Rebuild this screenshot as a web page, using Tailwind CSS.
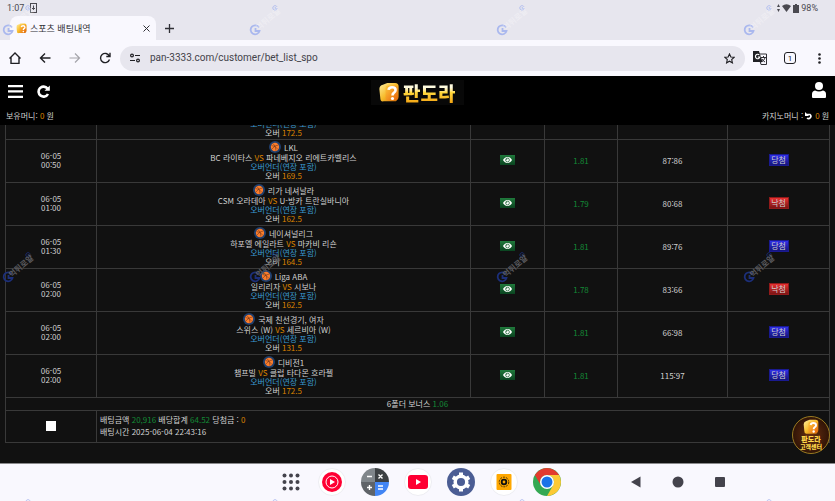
<!DOCTYPE html>
<html lang="ko">
<head>
  <meta charset="UTF-8">
  <meta name="viewport" content="width=device-width, initial-scale=1.0">
  <title>스포츠 배팅내역</title>
  <script src="https://cdn.jsdelivr.net/npm/@tailwindcss/browser@4"></script>
</head>
<body class="relative flex h-screen flex-col overflow-hidden bg-[#111111] font-['Noto_Sans_CJK_KR','Noto_Sans',sans-serif] text-[8px] leading-[9px] text-[#d0d0d0]">
  <!-- Shared icons -->
  <svg class="absolute h-0 w-0">
    <defs>
      <linearGradient id="gold" x1="0" y1="0" x2="1" y2="1">
        <stop offset="0" stop-color="#fff0a0"/>
        <stop offset=".5" stop-color="#f7bb2a"/>
        <stop offset="1" stop-color="#c46a08"/>
      </linearGradient>
      <linearGradient id="amber" x1="0" y1="0" x2="1" y2="1">
        <stop offset="0" stop-color="#ffc93c"/>
        <stop offset="1" stop-color="#e8650a"/>
      </linearGradient>
    </defs>
    <symbol id="box" viewBox="0 0 24 24">
      <path d="M1 8Q1 4 5 3l5-2h9q4 0 4 4v12q0 3-3 5H6q-4 1-4-4z" fill="url(#gold)"/>
      <path d="M10 4h9q3 0 3 3v10q0 4-4 4h-7q-3 0-3-3V7q0-3 2-3z" fill="url(#amber)"/>
      <path d="M11.500 9q.5-3 4-3 4 0 4 3.200 0 2-2 3.200-1.500 1-1.500 3" fill="none" stroke="#fff" stroke-width="3"/>
      <circle cx="16" cy="18.800" r="1.800" fill="#fff"/>
    </symbol>
    <symbol id="ball" viewBox="0 0 24 24">
      <circle cx="12" cy="12" r="12" fill="#1f3f6e"/>
      <circle cx="12" cy="12" r="8.300" fill="#fb7d2c"/>
      <path d="M5 9q8 0 13 8M8 5q6 5 6 14.500M19 8q-8 0-13 8" fill="none" stroke="#5a2a18"/>
    </symbol>
    <symbol id="eye" viewBox="0 0 24 16">
      <path d="M12 0C6 0 2 4 0 8c2 4 6 8 12 8s10-4 12-8c-2-4-6-8-12-8z" fill="#fff"/>
      <circle cx="12" cy="8" r="5" fill="none" stroke="#17602f" stroke-width="2"/>
      <path d="M9 8a3 3 0 0 1 3-3" fill="none" stroke="#17602f" stroke-width="1.500"/>
    </symbol>
    <symbol id="mark" viewBox="0 0 12 12">
      <path d="M10 3.500A4.500 4.500 0 1 0 10.500 7H6.500V4" fill="none" stroke="currentColor" stroke-width="1.800"/>
    </symbol>
  </svg>

  <!-- Status bar and tab strip -->
  <div class="shrink-0 bg-[#e7e6ee] font-[Roboto,sans-serif] text-[#4a4950]">
    <div class="flex h-4 items-center px-[7px] text-[9px]">
      <span>1:07</span>
      <svg class="ml-[6px] h-[10px] w-[7px]" viewBox="0 0 7 10" fill="none" stroke="currentColor"><rect x=".5" y=".5" width="6" height="9"/><path d="M3.500 2.500v4M2 5l1.500 1.500L5 5"/></svg>
      <div class="ml-auto flex items-center gap-[2px] pr-[10px]">
        <svg class="h-[8px] w-[3px]" viewBox="0 0 3 8" fill="currentColor"><path d="M0 3 1.500 0 3 3zM0 5h3L1.500 8z"/></svg>
        <svg class="h-[8px] w-[9px]" viewBox="0 0 9 8" fill="currentColor"><path d="M0 2Q4.500-1.500 9 2L4.500 8z"/></svg>
        <svg class="h-[9px] w-[6px]" viewBox="0 0 6 9" fill="currentColor"><path d="M2 0h2v1h2v8H0V1h2z"/></svg>
        <span>98%</span>
      </div>
    </div>
    <div class="flex h-6 items-center pl-[10px]">
      <div class="flex h-6 w-[146px] items-center rounded-t-lg bg-[#f9f8fe] px-[6px] text-[#303036]">
        <svg class="h-[11px] w-[11px]"><use href="#box"/></svg>
        <span class="ml-[3px] font-['Noto_Sans_CJK_KR',sans-serif] text-[9px]">스포츠 배팅내역</span>
        <button class="ml-auto" aria-label="탭 닫기"><svg class="h-[7px] w-[7px]" viewBox="0 0 7 7" stroke="currentColor"><path d="M.5.5l6 6M6.500.5l-6 6"/></svg></button>
      </div>
      <button class="ml-[9px]" aria-label="새 탭"><svg class="h-[9px] w-[9px]" viewBox="0 0 9 9" stroke="#303036" stroke-width="1.300"><path d="M4.500 0v9M0 4.500h9"/></svg></button>
    </div>
  </div>

  <!-- Browser toolbar -->
  <div class="flex h-9 shrink-0 items-center bg-[#f9f8fe] pr-[14px] pl-[9px] text-[#202024]">
    <div class="flex gap-[18px]">
      <button aria-label="홈"><svg class="h-3 w-3" viewBox="0 0 12 12" fill="none" stroke="currentColor" stroke-width="1.400"><path d="M.5 6.500 6 1l5.500 5.500M2 5.500v6h8v-6"/></svg></button>
      <button aria-label="뒤로"><svg class="h-3 w-3" viewBox="0 0 12 12" fill="none" stroke="currentColor" stroke-width="1.400"><path d="M11.500 6H1.500M6 1.500 1.500 6 6 10.500"/></svg></button>
      <button aria-label="앞으로" class="text-[#a5a4aa]"><svg class="h-3 w-3" viewBox="0 0 12 12" fill="none" stroke="currentColor" stroke-width="1.200"><path d="M.5 6h10M6 1.500 10.500 6 6 10.500"/></svg></button>
      <button aria-label="새로고침"><svg class="h-3 w-3" viewBox="0 0 12 12" fill="none" stroke="currentColor" stroke-width="1.400"><path d="M10.300 4A4.600 4.600 0 1 0 10.500 7.500M11 .8v3.700H7.300"/></svg></button>
    </div>
    <div class="ml-[9px] flex h-[25px] flex-1 items-center rounded-full bg-[#e7e6ee] px-[10px]">
      <svg class="h-[10px] w-[10px] shrink-0" viewBox="0 0 10 10" fill="none" stroke="currentColor" stroke-width="1.200"><circle cx="2" cy="2.500" r="1.400"/><path d="M5 2.500h5M0 7.500h5"/><circle cx="8" cy="7.500" r="1.400"/></svg>
      <input type="text" aria-label="주소" value="pan-3333.com/customer/bet_list_spo" class="ml-[10px] flex-1 bg-transparent font-[Roboto,sans-serif] text-[10px] leading-[14px] text-[#44434a]">
      <svg class="h-[11px] w-[11px] shrink-0" viewBox="0 0 12 12" fill="none" stroke="currentColor" stroke-width="1.200"><path d="M6 1l1.500 3.300 3.600.4-2.700 2.400.8 3.600L6 8.900l-3.200 1.800.8-3.600L.9 4.700l3.600-.4z"/></svg>
    </div>
    <button class="ml-2" aria-label="번역"><svg class="h-[14px] w-[14px]" viewBox="0 0 14 14"><path d="M5 3h8.500v10.500H8z" fill="#f9f8fe" stroke="#303036"/><path d="M8 6.500h5M10.500 5v1.500M12 7q-1 3-4 4M9 8q1 2 3 3" stroke="#303036" fill="none"/><path d="M0 0h6l3.500 11H0z" fill="#202024"/><path d="M6.300 4A2.200 2.200 0 1 0 6.800 6H4.800" stroke="#fff" stroke-width="1.100" fill="none"/></svg></button>
    <button class="ml-[17px] flex h-3 w-3 items-center justify-center rounded-[3px] border border-[#202024] font-[Roboto,sans-serif] text-[8px]" aria-label="열린 탭">1</button>
    <button class="ml-[22px]" aria-label="메뉴"><svg class="h-[11px] w-[3px]" viewBox="0 0 3 11" fill="currentColor"><circle cx="1.500" cy="1.500" r="1.300"/><circle cx="1.500" cy="5.500" r="1.300"/><circle cx="1.500" cy="9.500" r="1.300"/></svg></button>
  </div>

  <!-- Site header -->
  <header class="shrink-0 bg-black px-[6px]">
    <div class="grid h-[33px] grid-cols-[1fr_auto_1fr] items-center">
      <div class="flex items-center gap-[14px] pb-[2px] pl-[2px] text-white">
        <button aria-label="메뉴 열기"><svg class="h-[13px] w-[15px]" viewBox="0 0 15 13" fill="currentColor"><path d="M0 0h15v2.300H0zM0 5.300h15v2.300H0zM0 10.700h15V13H0z"/></svg></button>
        <button aria-label="다시 불러오기"><svg class="h-[13px] w-[13px]" viewBox="0 0 13 13" fill="none" stroke="currentColor" stroke-width="2.600"><path d="M10.500 3.500A5 5 0 1 0 11 9"/><path d="M12.800.5v5.300H7.500z" fill="currentColor" stroke="none"/></svg></button>
      </div>
      <a href="/" class="flex h-[25px] w-[93px] items-center gap-[3px] bg-[#080808] pl-[7px]">
        <svg class="h-[21px] w-[22px]"><use href="#box"/></svg>
        <span class="bg-linear-to-b from-[#fffbe0] from-30% via-[#ffd83c] to-[#f09a00] bg-clip-text text-[19px] leading-[25px] font-black whitespace-nowrap text-transparent">판도라</span>
      </a>
      <a href="/customer" aria-label="내 정보" class="justify-self-end pr-[3px] pb-[6px]"><svg class="block h-4 w-[14px]" viewBox="0 0 14 16" fill="#fff"><circle cx="7" cy="4" r="4"/><path d="M0 15v-3q0-3 3-3.500Q7 10.500 11 8.500q3 .5 3 3.500v3q0 1-1 1H1q-1 0-1-1z"/></svg></a>
    </div>
    <div class="flex h-4 items-center justify-between pb-[3px]">
      <p>보유머니: <span class="text-[#d98200]">0</span> 원</p>
      <p class="flex items-center gap-[2px]">카지노머니 : <svg class="h-2 w-2" viewBox="0 0 8 8"><path d="M1.500 2.500H5a2.200 2.200 0 1 1-3 3.500" fill="none" stroke="#fff" stroke-width="1.600"/><path d="M0 0v4h4z" fill="#fff"/></svg> <span class="text-[#d98200]">0</span> 원</p>
    </div>
  </header>

  <!-- Bet list, scrolled to the end -->
  <main class="flex min-h-0 flex-1 flex-col justify-end overflow-hidden border-b border-[#8a8a8c] px-[5px] pb-5">
    <table class="w-full table-fixed border-collapse text-center">
      <colgroup>
        <col class="w-[91px]">
        <col>
        <col class="w-[74px]">
        <col class="w-[73px]">
        <col class="w-[110px]">
        <col class="w-[102px]">
      </colgroup>
      <tbody id="bets"></tbody>
      <tbody>
        <tr class="h-[13px]">
          <td colspan="6" class="border border-[#393939] pb-[2px]">6폴더 보너스 <span class="text-[#138a36]">1.06</span></td>
        </tr>
        <tr class="h-8">
          <td class="border border-[#393939] pb-[2px]"><input type="checkbox" aria-label="배팅 선택" class="h-[10px] w-[10px] appearance-none bg-white align-middle"></td>
          <td colspan="5" class="border border-[#393939] px-[3px] pb-[2px] text-left leading-[12px]">
            <p>배팅금액 <span class="text-[#138a36]">20,916</span> 배당합계 <span class="text-[#138a36]">64.52</span> 당첨금 : <span class="text-[#d98200]">0</span></p>
            <p>배팅시간 2025-06-04 22:43:16</p>
          </td>
        </tr>
      </tbody>
    </table>
  </main>

  <!-- Dock -->
  <nav class="grid h-[37px] shrink-0 grid-cols-[1fr_auto_1fr] items-center bg-[#f9f8fe] pb-[2px] pl-1">
    <div></div>
    <div class="flex items-center gap-[15px]">
      <button aria-label="앱 목록" class="flex w-6 justify-center"><svg class="h-[18px] w-[18px]" viewBox="0 0 18 18" fill="#44434c"><circle cx="2.500" cy="2.500" r="2"/><circle cx="9" cy="2.500" r="2"/><circle cx="15.500" cy="2.500" r="2"/><circle cx="2.500" cy="9" r="2"/><circle cx="9" cy="9" r="2"/><circle cx="15.500" cy="9" r="2"/><circle cx="2.500" cy="15.500" r="2"/><circle cx="9" cy="15.500" r="2"/><circle cx="15.500" cy="15.500" r="2"/></svg></button>
      <button aria-label="YouTube Music"><svg class="block h-7 w-7" viewBox="0 0 28 28"><circle cx="14" cy="14" r="13.500" fill="#fff" stroke="#ededf2"/><circle cx="14" cy="14" r="10" fill="#f03"/><circle cx="14" cy="14" r="6" fill="none" stroke="#fff"/><path d="M12 11l5 3-5 3z" fill="#fff"/></svg></button>
      <button aria-label="계산기"><svg class="block h-7 w-7" viewBox="0 0 28 28"><path d="M14 0A14 14 0 0 0 0 14h14z" fill="#80868b"/><path d="M14 0a14 14 0 0 1 14 14H14z" fill="#3c4043"/><path d="M0 14a14 14 0 0 0 14 14V14z" fill="#5f6368"/><path d="M28 14a14 14 0 0 1-14 14V14z" fill="#4285f4"/><path d="M6 8.500h5M17.500 6.500l4 4M21.500 6.500l-4 4M6 19.500h5M8.500 17v5M17 18h5M17 21h5" stroke="#fff" stroke-width="1.400"/></svg></button>
      <button aria-label="YouTube"><svg class="block h-7 w-7" viewBox="0 0 28 28"><circle cx="14" cy="14" r="13.500" fill="#fff" stroke="#ededf2"/><rect x="4" y="7" width="20" height="14" rx="3" fill="#f03"/><path d="M12 11l5 3-5 3z" fill="#fff"/></svg></button>
      <button aria-label="설정"><svg class="block h-7 w-7" viewBox="0 0 28 28"><circle cx="14" cy="14" r="14" fill="#4b5d94"/><circle cx="14" cy="14" r="5.800" fill="none" stroke="#fff" stroke-width="3.500"/><path d="M14 4.500v3M14 20.500v3M5.800 9.200l2.600 1.500M19.600 17.300l2.600 1.500M5.800 18.800l2.600-1.500M19.600 10.700l2.600-1.500" stroke="#fff" stroke-width="4"/></svg></button>
      <button aria-label="음악"><svg class="block h-7 w-7" viewBox="0 0 28 28"><circle cx="14" cy="14" r="13.500" fill="#fff" stroke="#ededf2"/><rect x="6.500" y="6" width="15" height="16" rx="1" fill="#ffa800"/><circle cx="14" cy="14" r="4.800" fill="none" stroke="#4a3000" stroke-dasharray="2 1"/><circle cx="14" cy="14" r="2.300" fill="none" stroke="#111" stroke-width="1.800"/></svg></button>
      <button aria-label="Chrome"><svg class="block h-7 w-7" viewBox="0 0 28 28"><circle cx="14" cy="14" r="14" fill="#34a853"/><path d="M1.900 7A14 14 0 0 1 26.100 7H14a7 7 0 0 0-6 10.500z" fill="#e33b2e"/><path d="M26.100 7A14 14 0 0 1 14 28l6-10.500A7 7 0 0 0 14 7z" fill="#fcc934"/><circle cx="14" cy="14" r="7" fill="#fff"/><circle cx="14" cy="14" r="5.500" fill="#1a73e8"/></svg></button>
    </div>
    <div class="flex items-center gap-[26px] pl-[67px]">
      <button aria-label="뒤로 가기"><svg class="block h-3 w-4" viewBox="0 0 16 12" fill="#44434c"><path d="M3 6l9.500-5.500v11z"/></svg></button>
      <button aria-label="홈 화면"><svg class="block h-3 w-4" viewBox="0 0 16 12" fill="#44434c"><circle cx="8" cy="6" r="5.500"/></svg></button>
      <button aria-label="최근 앱"><svg class="block h-3 w-4" viewBox="0 0 16 12" fill="#44434c"><rect x="3" y="1" width="10" height="10" rx="1"/></svg></button>
    </div>
  </nav>

  <!-- Customer center button -->
  <a href="/customer" class="absolute right-[5px] bottom-[47px] flex h-[38px] w-[38px] flex-col items-center rounded-full border border-[#9a7a20] bg-radial from-[#6a3010] to-[#1c0a04] pt-[2px] font-black text-[#ffd84a]">
    <svg class="h-4 w-[18px] shrink-0"><use href="#box"/></svg>
    <span class="text-[7px] leading-[8px] whitespace-nowrap">판도라</span>
    <span class="text-[6px] leading-[8px] whitespace-nowrap">고객센터</span>
  </a>

  <!-- Watermarks -->
  <div id="watermarks" class="pointer-events-none absolute inset-0 overflow-hidden"></div>

  <script>
    // The first row is scrolled under the header, only its last lines show
    const bets = [
      { line: '172.5', odds: '', score: '', won: null },
      { time: '00:50', league: 'LKL', home: 'BC 라이타스', away: '파네베지오 리에트카벨리스', line: '169.5', odds: '1.81', score: '87:86', won: true },
      { time: '01:00', league: '리가 네셔날라', home: 'CSM 오라데아', away: 'U-방카 트란실바니아', line: '162.5', odds: '1.79', score: '80:68', won: false },
      { time: '01:30', league: '네이셔널리그', home: '하포엘 에일라트', away: '마카비 리숀', line: '164.5', odds: '1.81', score: '89:76', won: true },
      { time: '02:00', league: 'Liga ABA', home: '일리리자', away: '시보나', line: '162.5', odds: '1.78', score: '83:66', won: false },
      { time: '02:00', league: '국제 친선경기, 여자', home: '스위스 (W)', away: '세르비아 (W)', line: '131.5', odds: '1.81', score: '66:98', won: true },
      { time: '02:00', league: '디비전1', home: '챔프빌', away: '클럽 타다몬 흐라젤', line: '172.5', odds: '1.81', score: '115:97', won: true },
    ];

    const badges = {
      true: '<span class="inline-block h-3 w-5 border border-[#1a1a90] bg-linear-to-b from-[#3030e8] to-[#15157c] leading-[10px] align-middle">당첨</span>',
      false: '<span class="inline-block h-3 w-5 border border-[#901a1a] bg-linear-to-b from-[#e83030] to-[#7c1515] leading-[10px] align-middle">낙첨</span>',
      null: '',
    };

    document.getElementById('bets').innerHTML = bets.map(bet => `
      <tr class="h-[43px]">
        <td class="border border-[#393939] pb-[2px]">${bet.won === null ? '' : `06-05<br>${bet.time}`}</td>
        <td class="border border-[#393939] pb-[2px] align-bottom whitespace-nowrap">
          ${bet.won === null ? '' : `
          <div class="flex h-3 items-center justify-center gap-[3px]"><svg class="h-3 w-3"><use href="#ball"/></svg>${bet.league}</div>
          <p>${bet.home} <span class="text-[#d98200]">VS</span> ${bet.away}</p>
          `}
          <p class="text-[#3a9bd0]">오버언더(연장 포함)</p>
          <p>오버 <span class="text-[#d98200]">${bet.line}</span></p>
        </td>
        <td class="border border-[#393939] pb-[2px]">${bet.won === null ? '' : '<button aria-label="상세 보기" class="inline-flex h-[10px] w-[15px] items-center justify-center bg-linear-to-b from-[#207a3c] to-[#0a4420] align-middle"><svg class="h-[6px] w-[9px]"><use href="#eye"/></svg></button>'}</td>
        <td class="border border-[#393939] pb-[2px] text-[#138a36]">${bet.odds}</td>
        <td class="border border-[#393939] pb-[2px]">${bet.score}</td>
        <td class="border border-[#393939] pb-[2px]">${badges[bet.won]}</td>
      </tr>
    `).join('');

    // The mark repeats every 247px in both directions
    const watermarks = document.getElementById('watermarks');
    for (let y = 0; y < 3; y++) {
      for (let x = 0; x < 4; x++) {
        const tone = y === 1 ? 'text-[#5a5a5e]' : 'text-white/30';
        const ring = y === 1 ? 'text-[#1c2f7a]' : 'text-[#aab8ee]';
        // The bottom row only reaches the screen with its small ring
        const label = y === 2 ? '' : `<span class="absolute top-[14px] left-[6px] -rotate-40 text-[8px] font-bold whitespace-nowrap ${tone}">먹튀로얄</span>`;
        watermarks.innerHTML += `
          <div class="absolute h-9 w-9" style="left:${x * 247}px;top:${y * 247}px">
            <svg class="absolute bottom-0 left-[2px] h-3 w-3 ${ring}"><use href="#mark"/></svg>
            <svg class="absolute top-[5px] right-[5px] h-[6px] w-[6px] ${ring}"><use href="#mark"/></svg>
            ${label}
          </div>
        `;
      }
    }
  </script>
</body>
</html>
